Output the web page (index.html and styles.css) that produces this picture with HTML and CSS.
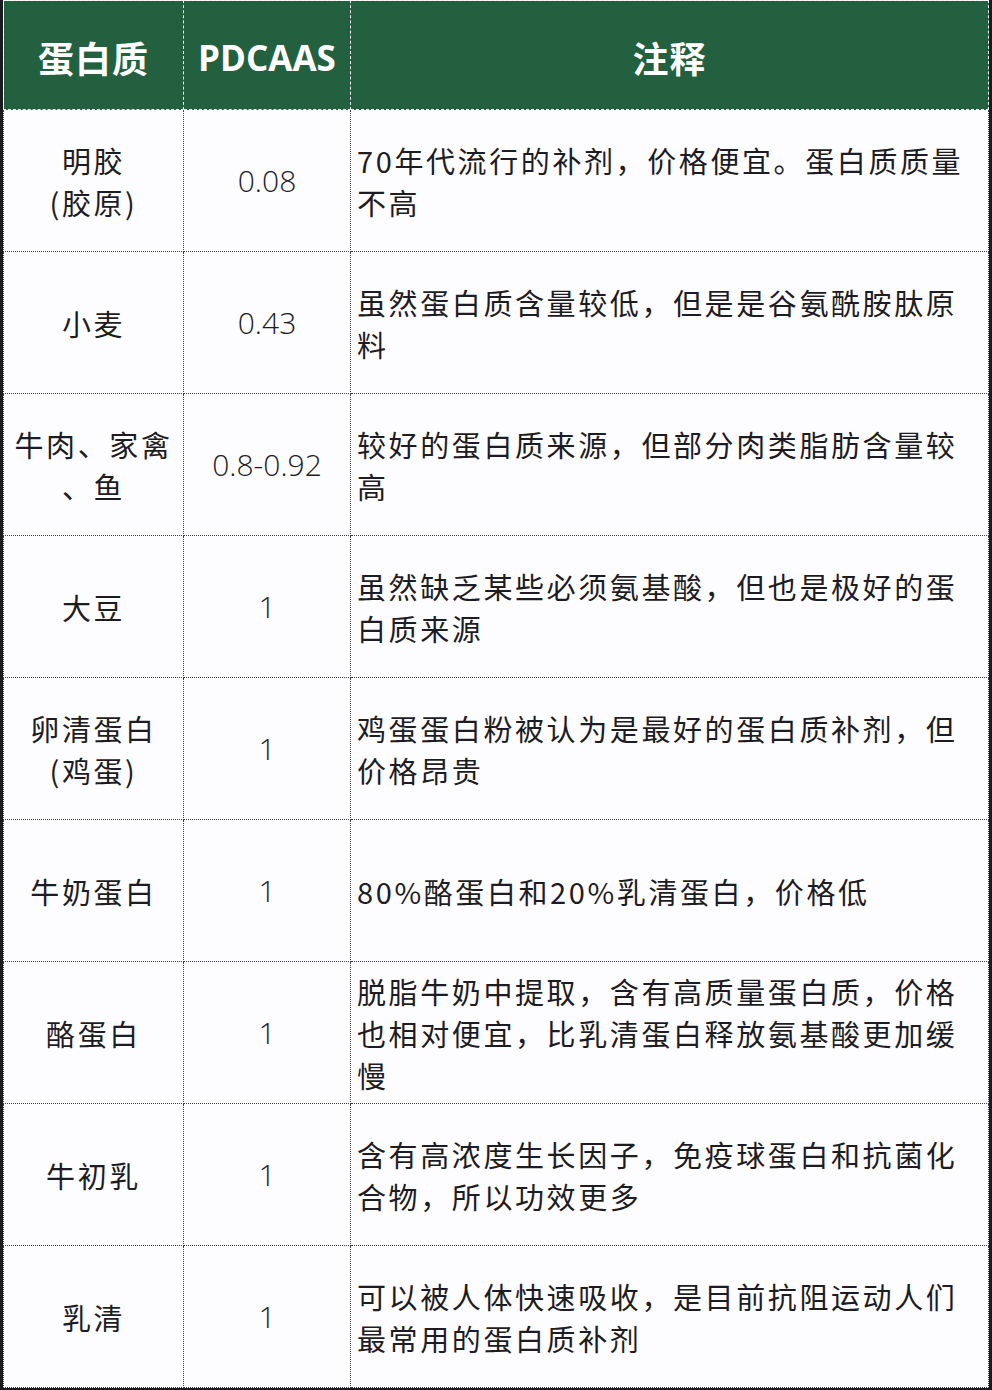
FILE: index.html
```html
<!DOCTYPE html>
<html lang="zh-CN">
<head>
<meta charset="utf-8">
<title>蛋白质 PDCAAS</title>
<link rel="stylesheet" href="styles.css">
</head>
<body>
<div class="frame">
<table class="ptable">
  <colgroup>
    <col class="c-name">
    <col class="c-score">
    <col class="c-note">
  </colgroup>
  <thead>
    <tr>
      <th>蛋白质</th>
      <th class="latin">PDCAAS</th>
      <th>注释</th>
    </tr>
  </thead>
  <tbody>
    <tr>
      <td class="name">明胶<br>(胶原)</td>
      <td class="score">0.08</td>
      <td class="note">70年代流行的补剂，价格便宜。蛋白质质量<br>不高</td>
    </tr>
    <tr>
      <td class="name">小麦</td>
      <td class="score">0.43</td>
      <td class="note">虽然蛋白质含量较低，但是是谷氨酰胺肽原<br>料</td>
    </tr>
    <tr>
      <td class="name">牛肉、家禽<br>、鱼</td>
      <td class="score">0.8-0.92</td>
      <td class="note">较好的蛋白质来源，但部分肉类脂肪含量较<br>高</td>
    </tr>
    <tr>
      <td class="name">大豆</td>
      <td class="score">1</td>
      <td class="note">虽然缺乏某些必须氨基酸，但也是极好的蛋<br>白质来源</td>
    </tr>
    <tr>
      <td class="name">卵清蛋白<br>(鸡蛋)</td>
      <td class="score">1</td>
      <td class="note">鸡蛋蛋白粉被认为是最好的蛋白质补剂，但<br>价格昂贵</td>
    </tr>
    <tr>
      <td class="name">牛奶蛋白</td>
      <td class="score">1</td>
      <td class="note">80%酪蛋白和20%乳清蛋白，价格低</td>
    </tr>
    <tr>
      <td class="name">酪蛋白</td>
      <td class="score">1</td>
      <td class="note">脱脂牛奶中提取，含有高质量蛋白质，价格<br>也相对便宜，比乳清蛋白释放氨基酸更加缓<br>慢</td>
    </tr>
    <tr>
      <td class="name">牛初乳</td>
      <td class="score">1</td>
      <td class="note">含有高浓度生长因子，免疫球蛋白和抗菌化<br>合物，所以功效更多</td>
    </tr>
    <tr>
      <td class="name">乳清</td>
      <td class="score">1</td>
      <td class="note">可以被人体快速吸收，是目前抗阻运动人们<br>最常用的蛋白质补剂</td>
    </tr>
  </tbody>
</table>
</div>
</body>
</html>
```

FILE: styles.css
```css
html, body {
  margin: 0;
  padding: 0;
  background: #ffffff;
}

body {
  width: 992px;
  height: 1390px;
  overflow: hidden;
  font-family: "Noto Sans CJK SC", "Noto Sans", sans-serif;
  color: #1c1c22;
}

.frame {
  width: 986px;
  border-left: 3px solid #1b1b1f;
  border-right: 3px solid #1b1b1f;
  border-bottom: 3px solid #1b1b1f;
  background: #fdfdff;
}

.ptable {
  width: 100%;
  border-collapse: collapse;
  table-layout: fixed;
}

.c-name { width: 180px; }
.c-score { width: 167px; }

.ptable th {
  height: 104px;
  padding: 4px 0 0;
  background: #22603f;
  color: #ffffff;
  font-weight: 700;
  font-size: 36px;
  letter-spacing: 1px;
  text-align: center;
  vertical-align: middle;
  border: 1px dashed #f2f2f2;
}

.ptable th.latin {
  font-family: "Open Sans", "Noto Sans", sans-serif;
  font-size: 35px;
  letter-spacing: 0;
}

.ptable td {
  height: 141px;
  padding: 0;
  border: 1px dotted #3c3c44;
  vertical-align: middle;
  font-size: 29px;
  line-height: 42px;
  letter-spacing: 2.6px;
}

.ptable td.name {
  text-align: center;
}

.ptable td.score {
  text-align: center;
  font-family: "Open Sans", "Noto Sans", sans-serif;
  font-weight: 300;
  font-size: 30px;
  letter-spacing: 0;
}

.ptable td.note {
  text-align: left;
  padding-left: 6px;
  white-space: nowrap;
}
```
